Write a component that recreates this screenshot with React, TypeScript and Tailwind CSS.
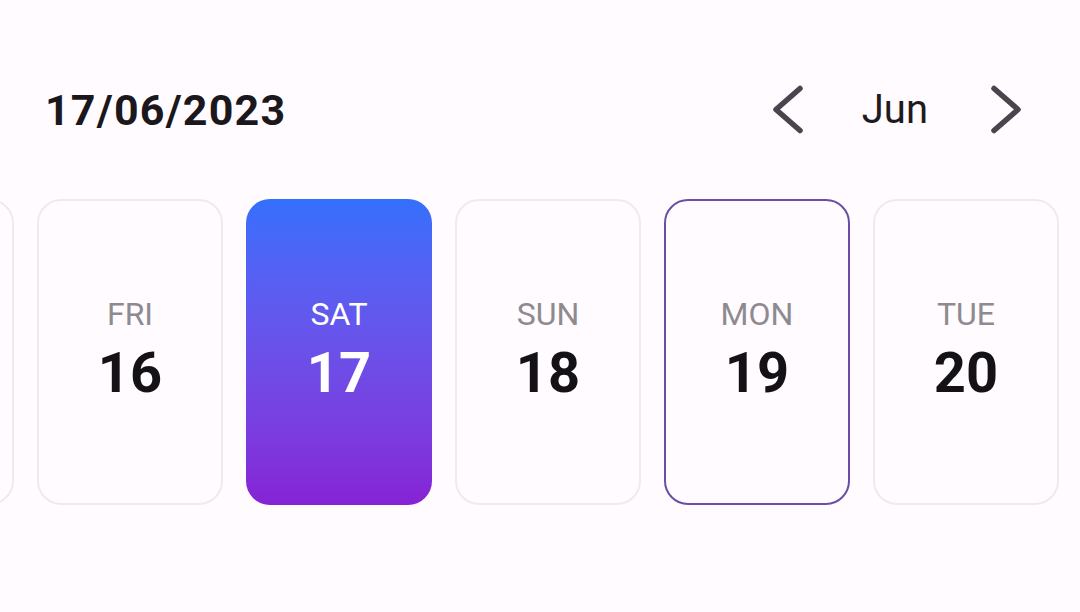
import React from "react";

type Day = { name: string; num: number; state?: "selected" | "today" | "edge" };

const days: Day[] = [
  { name: "THU", num: 15, state: "edge" },
  { name: "FRI", num: 16 },
  { name: "SAT", num: 17, state: "selected" },
  { name: "SUN", num: 18 },
  { name: "MON", num: 19, state: "today" },
  { name: "TUE", num: 20 },
];

function Chevron({ dir }: { dir: "left" | "right" }) {
  return (
    <svg width="30" height="50" viewBox="0 0 30 50" fill="none" className="shrink-0">
      <path
        d={dir === "left" ? "M27 3.5 L3 24.5 L27 45.5" : "M3 3.5 L27 24.5 L3 45.5"}
        stroke="#49454f"
        strokeWidth="5.5"
        strokeLinecap="round"
        strokeLinejoin="round"
      />
    </svg>
  );
}

function DayLabel({ day, light }: { day: Day; light?: boolean }) {
  return (
    <>
      <span className={`text-[32px] leading-none ${light ? "text-white" : "text-[#8e8a90]"}`}>
        {day.name}
      </span>
      <span
        className={`mt-[15px] text-[56px] font-bold leading-none ${light ? "text-white" : "text-[#141217]"}`}
      >
        {day.num}
      </span>
    </>
  );
}

function DayCard({ day }: { day: Day }) {
  const base =
    "flex h-[306px] w-[186px] shrink-0 flex-col items-center justify-center rounded-[24px] pb-[6px]";
  if (day.state === "selected") {
    return (
      <div className={`${base} bg-gradient-to-b from-[#336ffd] to-[#8622d5]`}>
        <DayLabel day={day} light />
      </div>
    );
  }
  if (day.state === "edge") {
    // only the rounded right edge of the previous day peeks in at the left
    return <div className={`${base} border-2 border-[#f0eaee]`} />;
  }
  const border =
    day.state === "today" ? "border-[2.5px] border-[#6a4ea6]" : "border-2 border-[#f0eaee]";
  return (
    <div className={`${base} ${border}`}>
      <DayLabel day={day} />
    </div>
  );
}

export default function App() {
  return (
    <div
      className="h-[612px] w-[1080px] overflow-hidden bg-[#fffbfe]"
      style={{ fontFamily: "Roboto, 'Noto Sans', sans-serif" }}
    >
      <div className="mt-[84px] flex h-[52px] items-center justify-between pl-[45px] pr-[59px]">
        <h1 className="text-[43px] font-bold leading-[52px] tracking-[1.2px] text-[#1a181c]">
          17/06/2023
        </h1>
        <div className="flex items-center">
          <Chevron dir="left" />
          <span className="ml-[59px] mr-[63px] text-[40px] leading-[52px] text-[#1d1b20]">Jun</span>
          <Chevron dir="right" />
        </div>
      </div>
      <div className="mt-[63px] flex gap-[23px]" style={{ marginLeft: -172 }}>
        {days.map((d) => (
          <DayCard key={d.num} day={d} />
        ))}
      </div>
    </div>
  );
}
